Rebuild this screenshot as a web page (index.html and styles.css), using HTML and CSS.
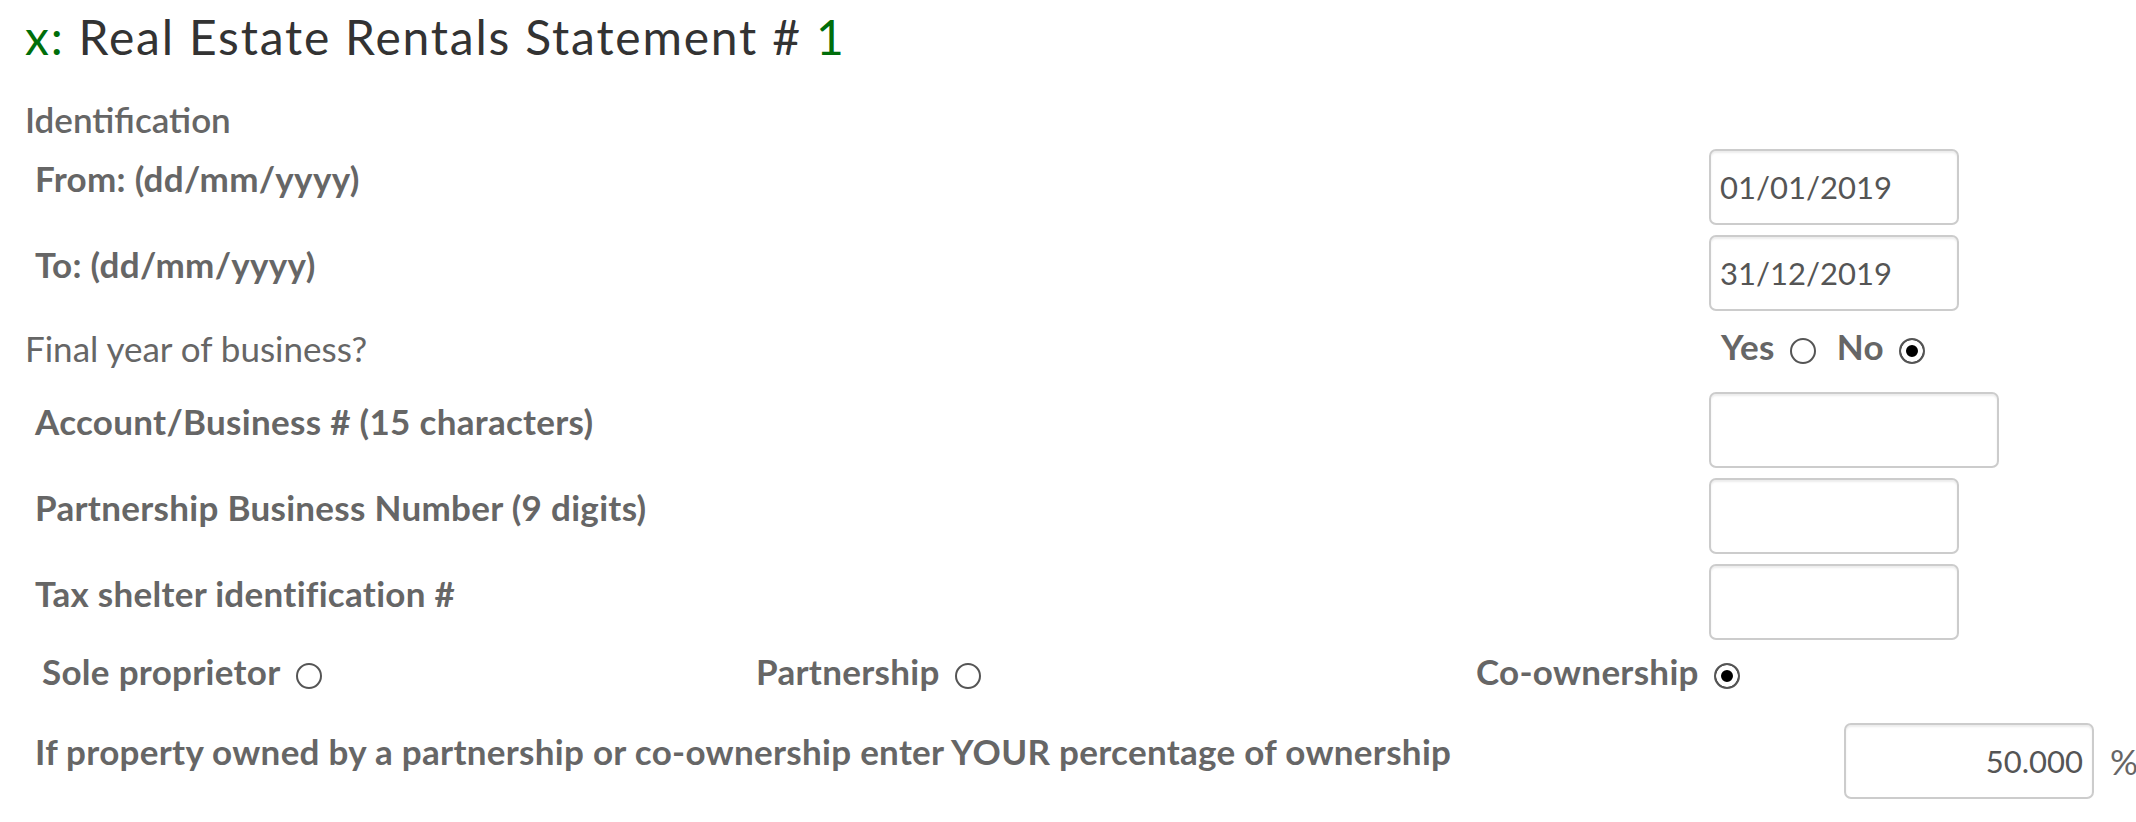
FILE: index.html
```html
<!DOCTYPE html>
<html lang="en">
  <head>
    <meta charset="UTF-8" />
    <meta name="viewport" content="width=device-width, initial-scale=1.0" />
    <title>Real Estate Rentals Statement</title>
    <link rel="stylesheet" href="styles.css">
  </head>
  <body>
    <h1 class="title"><span class="accent">x:</span> Real Estate Rentals Statement # <span class="accent">1</span></h1>
    <h2 class="section">Identification</h2>

    <div class="rows">
      <div class="row">
        <label class="label" for="fromDate">From: (dd/mm/yyyy)</label>
        <div class="field"><input id="fromDate" class="box" type="text" value="01/01/2019" /></div>
      </div>
      <div class="row">
        <label class="label" for="toDate">To: (dd/mm/yyyy)</label>
        <div class="field"><input id="toDate" class="box" type="text" value="31/12/2019" /></div>
      </div>
      <div class="row row-final">
        <span class="label plain">Final year of business?</span>
        <div class="field choices">
          <label class="choice">Yes<input type="radio" name="finalYear" /></label>
          <label class="choice">No<input type="radio" name="finalYear" checked /></label>
        </div>
      </div>
      <div class="row">
        <label class="label" for="account">Account/Business # (15 characters)</label>
        <div class="field"><input id="account" class="box wide" type="text" /></div>
      </div>
      <div class="row">
        <label class="label" for="partnerNo">Partnership Business Number (9 digits)</label>
        <div class="field"><input id="partnerNo" class="box" type="text" /></div>
      </div>
      <div class="row">
        <label class="label" for="shelter">Tax shelter identification #</label>
        <div class="field"><input id="shelter" class="box" type="text" /></div>
      </div>
      <div class="row row-owner">
        <label class="choice">Sole proprietor<input type="radio" name="ownerType" /></label>
        <label class="choice">Partnership<input type="radio" name="ownerType" /></label>
        <label class="choice">Co-ownership<input type="radio" name="ownerType" checked /></label>
      </div>
      <div class="row row-pct">
        <label class="label" for="percent">If property owned by a partnership or co-ownership enter YOUR percentage of ownership</label>
        <div class="field pct">
          <input id="percent" class="box num" type="text" value="50.000" />
          <span class="unit">%</span>
        </div>
      </div>
    </div>
  </body>
</html>
```

FILE: styles.css
```css
* {
  box-sizing: border-box;
}
html,
body {
  overflow-x: hidden;
}
body {
  margin: 0;
  padding: 0 25px;
  font-family: Lato, "Open Sans", sans-serif;
  color: #666;
  background-color: #fff;
}
.title {
  margin: 9px 0 0;
  font-size: 48px;
  line-height: 56px;
  font-weight: normal;
  letter-spacing: 1.8px;
  color: #333;
}
.accent {
  color: #006e0a;
}
.section {
  margin: 33px 0 9px;
  font-size: 35px;
  line-height: 42px;
  font-weight: 600;
}
.rows {
  display: flex;
  flex-direction: column;
  gap: 10px;
}
.row {
  display: flex;
  align-items: flex-start;
}
.label {
  flex-shrink: 0;
  width: 1684px;
  padding: 8px 0 0 10px;
  font-size: 35px;
  line-height: 42px;
  font-weight: bold;
  letter-spacing: 0.3px;
}
.label.plain {
  padding: 6px 0 0;
  font-weight: normal;
  letter-spacing: 0;
}
.field {
  flex-shrink: 0;
}
.box {
  width: 250px;
  height: 76px;
  padding: 0 9px;
  border: 2px solid #ccc;
  border-radius: 7px;
  box-shadow: inset 0 2px 2px rgba(0, 0, 0, 0.075);
  font-family: Lato, "Open Sans", sans-serif;
  font-size: 31px;
  color: #555;
  background-color: #fff;
}
.box.wide {
  width: 290px;
}
.box.num {
  text-align: right;
}
.row-final {
  height: 61px;
}
.choices {
  display: flex;
  gap: 21px;
  padding: 4px 0 0 12px;
}
.choice {
  font-size: 35px;
  line-height: 42px;
  font-weight: bold;
  letter-spacing: 0.3px;
}
.choice input {
  appearance: none;
  width: 26px;
  height: 26px;
  margin: 0 0 0 15px;
  border: 2px solid #555;
  border-radius: 50%;
  vertical-align: -4px;
  background-color: #fff;
}
.choice input:checked {
  background-color: #000;
  box-shadow: inset 0 0 0 5px #fff;
}
.row-owner {
  display: grid;
  grid-template-columns: 714px 720px auto;
  height: 63px;
  padding-left: 17px;
}
.row-pct .label {
  width: 1819px;
  padding-top: 7px;
}
.pct {
  display: flex;
  align-items: center;
  gap: 16px;
}
.unit {
  font-size: 35px;
}
```
